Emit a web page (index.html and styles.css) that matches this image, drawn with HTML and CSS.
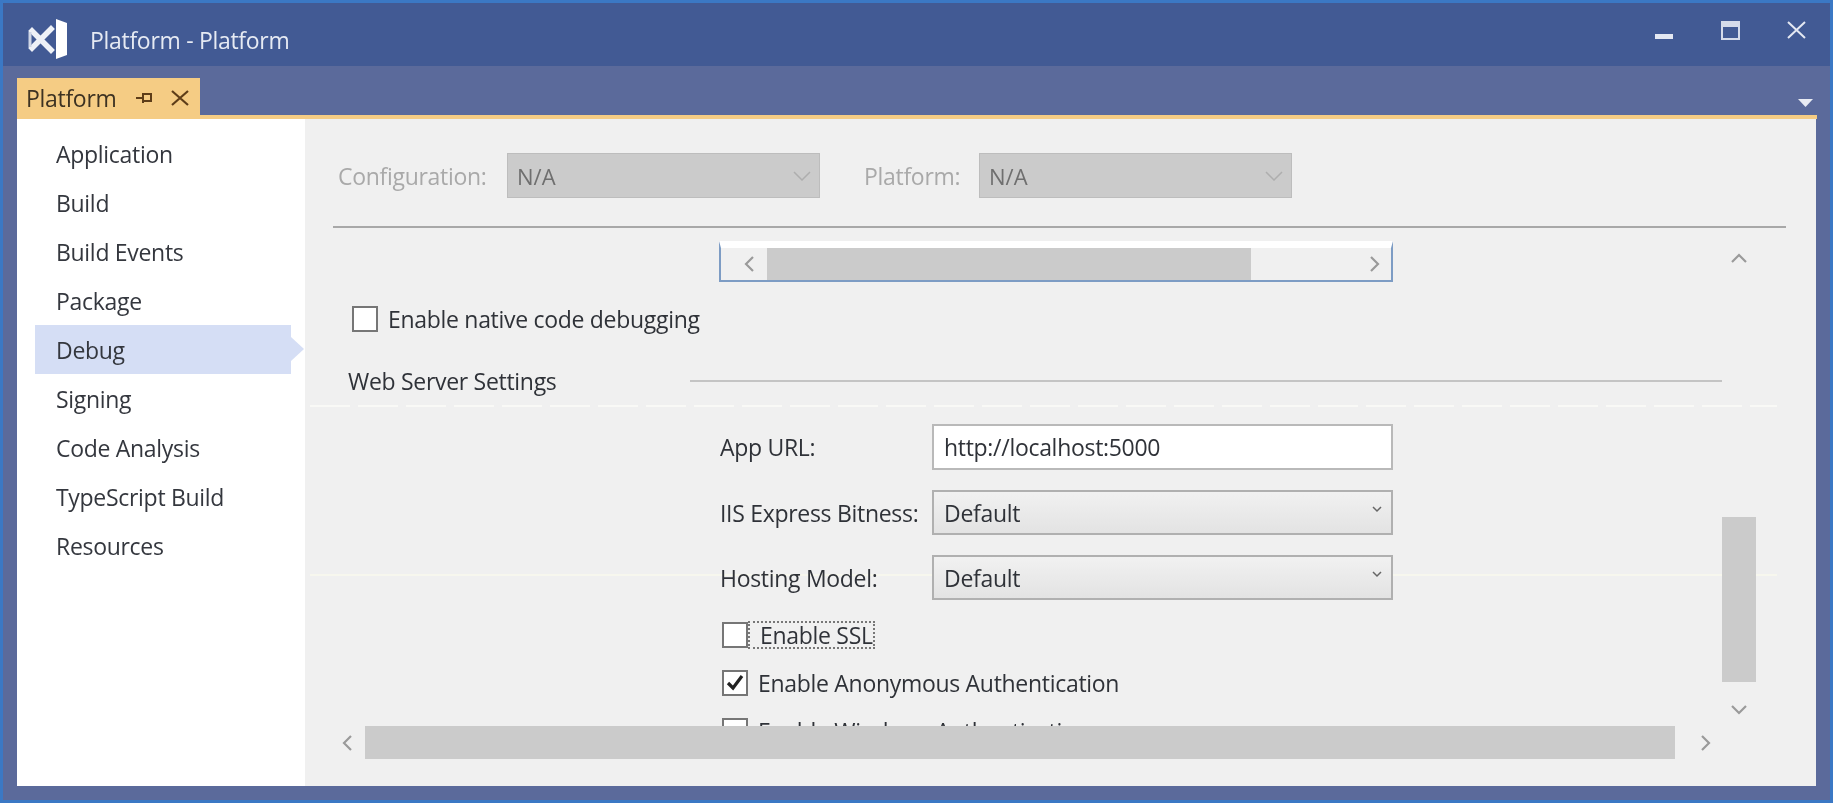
FILE: index.html
```html
<!DOCTYPE html>
<html lang="en">
<head>
  <meta charset="UTF-8" />
  <title>Platform - Platform</title>
  <link rel="stylesheet" href="styles.css">
</head>
<body>
  <div class="window">
    <!-- Title bar -->
    <header class="titlebar">
      <svg class="vs-logo" width="40" height="40" viewBox="0 0 40 40">
        <path fill="#fff" d="M29 0 40 4V36L29 40Z"/>
        <path fill="none" stroke="#eef1f7" stroke-width="5.500" stroke-linecap="square" d="M5 12 24 31M24 10 5 29"/>
        <path fill="none" stroke="#cfd6e6" stroke-width="3" d="M3 13V28"/>
      </svg>
      <span class="title-text">Platform - Platform</span>
      <div class="window-controls">
        <svg width="19" height="19" viewBox="0 0 19 19"><rect x="0" y="13" width="18" height="5" fill="#e4e8f2"/></svg>
        <svg width="19" height="19" viewBox="0 0 19 19"><path fill="none" stroke="#d5dbea" stroke-width="2" d="M1 1H18V18H1Z"/><rect x="1" y="1" width="17" height="5" fill="#d5dbea"/></svg>
        <svg width="19" height="19" viewBox="0 0 19 19"><path fill="none" stroke="#e4e8f2" stroke-width="2" d="M1 1 18 17M18 1 1 17"/></svg>
      </div>
    </header>

    <!-- Tab strip -->
    <div class="tabstrip">
      <div class="tab">
        <span>Platform</span>
        <svg class="tab-pin" width="18" height="14" viewBox="0 0 18 14"><path fill="none" stroke="#5e3d18" stroke-width="2" d="M0 7H7M7 2V12M7 3H15V10H7"/></svg>
        <svg class="tab-close" width="18" height="16" viewBox="0 0 18 16"><path fill="none" stroke="#5e3d18" stroke-width="2.200" d="M1 1 17 15M17 1 1 15"/></svg>
      </div>
      <svg class="tab-menu" width="15" height="8" viewBox="0 0 15 8"><path fill="#e8ebf3" d="M0 0H15L7.500 8Z"/></svg>
    </div>

    <div class="main">
      <!-- Project sections -->
      <nav class="sidebar">
        <a class="nav-item">Application</a>
        <a class="nav-item">Build</a>
        <a class="nav-item">Build Events</a>
        <a class="nav-item">Package</a>
        <a class="nav-item active">Debug</a>
        <a class="nav-item">Signing</a>
        <a class="nav-item">Code Analysis</a>
        <a class="nav-item">TypeScript Build</a>
        <a class="nav-item">Resources</a>
      </nav>

      <section class="content">
        <!-- faint scan lines left in the capture, they run behind the controls -->
        <div class="scanline scan-one"></div>
        <div class="scanline scan-two"></div>

        <div class="config-row">
          <span class="config-label">Configuration:</span>
          <div class="combo-disabled">
            <span>N/A</span>
            <svg width="18" height="10" viewBox="0 0 18 10"><path fill="none" stroke="#aeaeae" stroke-width="1.500" d="M1 1 9 9 17 1"/></svg>
          </div>
          <span class="config-label platform-label">Platform:</span>
          <div class="combo-disabled">
            <span>N/A</span>
            <svg width="18" height="10" viewBox="0 0 18 10"><path fill="none" stroke="#aeaeae" stroke-width="1.500" d="M1 1 9 9 17 1"/></svg>
          </div>
        </div>
        <div class="separator"></div>

        <div class="pane">
          <div class="pane-left">
            <div class="scroll-view">
              <div class="launch-box">
                <svg class="chev" width="10" height="16" viewBox="0 0 10 16"><path d="M9 1 2 8 9 15"/></svg>
                <div class="launch-thumb"></div>
                <svg class="chev launch-right" width="10" height="16" viewBox="0 0 10 16"><path d="M1 1 8 8 1 15"/></svg>
              </div>

              <div class="check-row native-row">
                <div class="checkbox"></div>
                <span>Enable native code debugging</span>
              </div>

              <div class="group-head">
                <span class="group-title">Web Server Settings</span>
                <div class="group-line"></div>
              </div>

              <div class="server-form">
                <label>App URL:</label>
                <input class="text-input" type="text" value="http://localhost:5000">
                <label>IIS Express Bitness:</label>
                <div class="combo">
                  <span>Default</span>
                  <svg width="10" height="7" viewBox="0 0 10 7"><path fill="none" stroke="#666" stroke-width="1.500" d="M1 1 5 5 9 1"/></svg>
                </div>
                <label>Hosting Model:</label>
                <div class="combo">
                  <span>Default</span>
                  <svg width="10" height="7" viewBox="0 0 10 7"><path fill="none" stroke="#666" stroke-width="1.500" d="M1 1 5 5 9 1"/></svg>
                </div>
              </div>

              <div class="check-list">
                <div class="check-row">
                  <div class="checkbox"></div>
                  <span class="focused">Enable SSL</span>
                </div>
                <div class="check-row">
                  <div class="checkbox">
                    <svg width="22" height="22" viewBox="0 0 22 22"><path fill="none" stroke="#222" stroke-width="3.200" d="M4 11 9 16 18 4"/></svg>
                  </div>
                  <span>Enable Anonymous Authentication</span>
                </div>
                <div class="check-row">
                  <div class="checkbox"></div>
                  <span>Enable Windows Authentication</span>
                </div>
              </div>
            </div>

            <div class="hscroll">
              <svg class="chev" width="10" height="16" viewBox="0 0 10 16"><path d="M9 1 2 8 9 15"/></svg>
              <div class="hscroll-thumb"></div>
              <svg class="chev" width="10" height="16" viewBox="0 0 10 16"><path d="M1 1 8 8 1 15"/></svg>
            </div>
          </div>

          <div class="vscroll">
            <svg class="chev" width="16" height="10" viewBox="0 0 16 10"><path d="M1 9 8 2 15 9"/></svg>
            <div class="vscroll-thumb"></div>
            <svg class="chev" width="16" height="10" viewBox="0 0 16 10"><path d="M1 1 8 8 15 1"/></svg>
          </div>
        </div>
      </section>
    </div>
  </div>
</body>
</html>
```

FILE: styles.css
```css
* {
  box-sizing: border-box;
  margin: 0;
  padding: 0;
  font-family: "Open Sans", "Noto Sans", sans-serif;
}

body {
  width: 100vw;
  height: 100vh;
  overflow: hidden;
  background: #3b78c4;
}

.window {
  height: 803px;
  border: 3px solid #3b78c4;
  display: flex;
  flex-direction: column;
  background: #5b6a9b;
  filter: blur(0.6px);
}

/* Title bar */
.titlebar {
  height: 63px;
  flex-shrink: 0;
  background: #425a94;
  display: flex;
  align-items: center;
  padding-left: 24px;
}

.vs-logo {
  margin-top: 9px;
}

.title-text {
  margin-left: 23px;
  margin-top: 11px;
  font-size: 23px;
  color: #e6eaf3;
  letter-spacing: -0.3px;
}

.window-controls {
  margin-left: auto;
  margin-right: 24px;
  margin-bottom: 8px;
  display: flex;
  gap: 47px;
}

/* Tab strip */
.tabstrip {
  height: 53px;
  flex-shrink: 0;
  margin-right: 13px;
  margin-left: 14px;
  border-bottom: 4px solid #f5cc84;
  display: flex;
  align-items: flex-end;
  justify-content: space-between;
}

.tab {
  width: 183px;
  height: 37px;
  background: #f5cc84;
  display: flex;
  align-items: center;
  padding: 3px 0 0 9px;
  font-size: 23px;
  color: #3d3222;
  letter-spacing: -0.3px;
}

.tab-pin {
  margin-left: 19px;
}

.tab-close {
  margin-left: 17px;
}

.tab-menu {
  margin-right: 4px;
  margin-bottom: 8px;
  align-self: flex-end;
}

/* Main area */
.main {
  flex: 1;
  min-height: 0;
  display: flex;
  margin: 0 14px 14px;
}

.sidebar {
  width: 288px;
  flex-shrink: 0;
  background: #fff;
  padding: 10px 0 0 18px;
  display: flex;
  flex-direction: column;
}

.nav-item {
  width: 256px;
  height: 49px;
  display: flex;
  align-items: center;
  padding-left: 21px;
  font-size: 23px;
  color: #34373e;
  letter-spacing: -0.3px;
  position: relative;
}

.nav-item.active {
  background: #d5def5;
}

/* little arrow pointing at the content */
.nav-item.active::after {
  content: "";
  position: absolute;
  left: 100%;
  top: 12px;
  border-left: 13px solid #d5def5;
  border-top: 12px solid transparent;
  border-bottom: 12px solid transparent;
}

.content {
  flex: 1;
  min-width: 0;
  background: #f0f0f0;
  padding: 34px 30px 0 28px;
  position: relative;
}

.config-row {
  height: 45px;
  display: flex;
  align-items: center;
  position: relative;
}

.config-label {
  width: 174px;
  padding-left: 5px;
  font-size: 23px;
  color: #a9a9a9;
  letter-spacing: -0.3px;
}

.platform-label {
  width: 159px;
  padding-left: 44px;
}

.combo-disabled {
  width: 313px;
  height: 45px;
  background: #cbcbcb;
  border: 1px solid #bdbdbd;
  display: flex;
  align-items: center;
  justify-content: space-between;
  padding: 0 8px 0 9px;
  font-size: 22px;
  color: #6f6f6f;
}

.separator {
  height: 2px;
  margin-top: 28px;
  background: #a8a8a8;
}

.pane {
  display: flex;
  position: relative;
}

.pane-left {
  width: 1389px;
}

.scroll-view {
  height: 498px;
  overflow: hidden;
}

/* Clipped list box above the checkbox */
.launch-box {
  width: 674px;
  height: 41px;
  margin: 13px 0 0 386px;
  border: 2px solid #7d9cc4;
  border-top: 7px solid #fff;
  display: flex;
  align-items: center;
  padding-left: 23px;
  padding-right: 11px;
}

.launch-thumb {
  width: 484px;
  height: 32px;
  margin-left: 13px;
  background: #cbcbcb;
}

.launch-right {
  margin-left: auto;
}

.chev {
  flex-shrink: 0;
}

.chev path {
  fill: none;
  stroke: #9a9a9a;
  stroke-width: 2.200;
}

.check-row {
  height: 26px;
  display: flex;
  align-items: center;
  gap: 10px;
  font-size: 23px;
  line-height: 26px;
  white-space: nowrap;
  color: #2f3238;
  letter-spacing: -0.3px;
}

.native-row {
  margin: 24px 0 0 19px;
}

.checkbox {
  width: 26px;
  height: 26px;
  flex-shrink: 0;
  border: 2px solid #767676;
  background: #fff;
  display: flex;
  align-items: center;
  justify-content: center;
}

.group-head {
  height: 30px;
  margin: 34px 0 0 15px;
  display: flex;
  align-items: center;
  font-size: 23px;
  color: #2f3238;
  letter-spacing: -0.3px;
}

.group-title {
  width: 342px;
}

.group-line {
  flex: 1;
  height: 2px;
  background: #c4c4c4;
}

.server-form {
  margin: 28px 0 0 387px;
  display: grid;
  grid-template-columns: 212px 461px;
  row-gap: 20px;
  align-items: center;
  font-size: 23px;
  color: #2f3238;
  letter-spacing: -0.3px;
}

.text-input {
  height: 46px;
  border: 2px solid #b9b9b9;
  background: #fff;
  padding: 0 10px;
  font-size: 23px;
  color: #2f3238;
  letter-spacing: -0.3px;
  outline: none;
}

.combo {
  height: 45px;
  border: 2px solid #b0b0b0;
  background: linear-gradient(#f1f1f1, #e3e3e3);
  display: flex;
  align-items: center;
  justify-content: space-between;
  padding: 0 9px 0 10px;
}

.combo svg {
  margin-bottom: 6px;
}

.check-list {
  margin: 22px 0 0 389px;
  display: flex;
  flex-direction: column;
  row-gap: 22px;
}

.focused {
  margin-left: -10px;
  padding-left: 10px;
  border: 2px dotted #777;
  line-height: 24px;
}

/* Scrollbars */
.hscroll {
  height: 33px;
  display: flex;
  align-items: center;
  padding-left: 9px;
}

.hscroll-thumb {
  width: 1310px;
  height: 33px;
  margin: 0 26px 0 13px;
  background: #cbcbcb;
}

.vscroll {
  width: 34px;
  display: flex;
  flex-direction: column;
  align-items: center;
}

.vscroll .chev:first-child {
  margin-top: 25px;
}

.vscroll-thumb {
  width: 34px;
  height: 165px;
  margin-top: 254px;
  background: #cbcbcb;
}

.vscroll-thumb + .chev {
  margin-top: 23px;
}

.scanline {
  position: absolute;
  left: 5px;
  right: 39px;
  height: 2px;
}

.scan-one {
  top: 286px;
  background: repeating-linear-gradient(90deg, #f9f9f6 0 40px, transparent 40px 48px);
}

.scan-two {
  top: 455px;
  background: #f7f7ee;
}
```
